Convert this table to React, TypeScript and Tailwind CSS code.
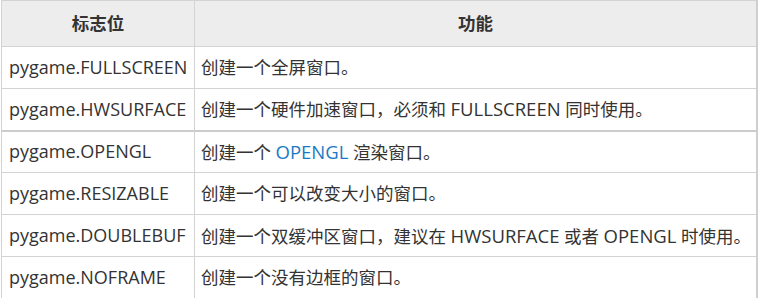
import React from 'react';

interface FlagRow {
  flag: string;
  desc: string;
  thick?: boolean;
}

const rows: FlagRow[] = [
  { flag: 'pygame.FULLSCREEN', desc: '创建一个全屏窗口。' },
  { flag: 'pygame.HWSURFACE', desc: '创建一个硬件加速窗口，必须和 FULLSCREEN 同时使用。', thick: true },
  { flag: 'pygame.OPENGL', desc: '创建一个 [OPENGL] 渲染窗口。' },
  { flag: 'pygame.RESIZABLE', desc: '创建一个可以改变大小的窗口。' },
  { flag: 'pygame.DOUBLEBUF', desc: '创建一个双缓冲区窗口，建议在 HWSURFACE 或者 OPENGL 时使用。' },
  { flag: 'pygame.NOFRAME', desc: '创建一个没有边框的窗口。' },
];

// latin runs are set a bit larger than the CJK runs, like the source page's font
function Mixed({ text }: { text: string }) {
  const parts = text.split(/(\[?[A-Za-z.]+\]?)/).filter(Boolean);
  return (
    <>
      {parts.map((p, i) => {
        if (/^\[.*\]$/.test(p)) {
          return (
            <span key={i} className="text-[18.5px] text-[#1a7ac4]">
              {p.slice(1, -1)}
            </span>
          );
        }
        if (/[A-Za-z]/.test(p)) {
          return (
            <span key={i} className="text-[18.5px]">
              {p}
            </span>
          );
        }
        return <span key={i}>{p}</span>;
      })}
    </>
  );
}

export default function App() {
  return (
    <div
      className="bg-white w-[759px] h-[298px] pl-px text-[17.5px] text-[#333333]"
      style={{ fontFamily: '"Open Sans", "Noto Sans CJK SC", sans-serif' }}
    >
      <table className="w-[757px] border-collapse border-r-2 border-b-2 border-[#cfcfcf] table-fixed">
        <colgroup>
          <col className="w-[193px]" />
          <col />
        </colgroup>
        <thead>
          <tr className="h-[46px] bg-[#ededed]">
            <th className="border border-[#d3d3d3] font-bold text-center">标志位</th>
            <th className="border border-[#d3d3d3] font-bold text-center">功能</th>
          </tr>
        </thead>
        <tbody>
          {rows.map((row) => (
            <tr
              key={row.flag}
              className={`h-[42px] ${row.thick ? 'border-b-2 border-[#cccccc]' : ''}`}
            >
              <td className="border border-[#d3d3d3] px-[7px] whitespace-nowrap text-[18px]">
                {row.flag}
              </td>
              <td className="border border-[#d3d3d3] px-[6px] whitespace-nowrap">
                <Mixed text={row.desc} />
              </td>
            </tr>
          ))}
        </tbody>
      </table>
    </div>
  );
}
